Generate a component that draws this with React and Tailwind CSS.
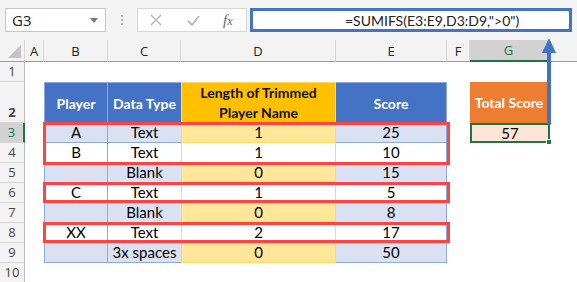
import React from 'react';

// sheet data, rows 3..9
const rows = [
  { n: 3, player: 'A', type: 'Text', len: 1, score: 25 },
  { n: 4, player: 'B', type: 'Text', len: 1, score: 10 },
  { n: 5, player: '', type: 'Blank', len: 0, score: 15 },
  { n: 6, player: 'C', type: 'Text', len: 1, score: 5 },
  { n: 7, player: '', type: 'Blank', len: 0, score: 8 },
  { n: 8, player: 'XX', type: 'Text', len: 2, score: 17 },
  { n: 9, player: '', type: '3x spaces', len: 0, score: 50 },
];

function RowHead({ n, selected, className = '' }) {
  return (
    <div
      className={`w-[25px] shrink-0 flex items-end justify-center pb-[1px] border-b border-[#d4d4d4] text-[13px] leading-[17px] [font-family:'Open_Sans',sans-serif] ${
        selected
          ? 'bg-[#d2d2d2] text-[#217346] border-r-2 border-r-[#217346]'
          : 'bg-[#f3f3f3] text-[#444] border-r border-r-[#bdbdbd]'
      } ${className}`}
    >
      {n}
    </div>
  );
}

function ColHead({ label, w, selected }) {
  return (
    <div
      className={`${w} shrink-0 flex items-center justify-center pt-[2px] border-r border-[#d4d4d4] text-[13px] [font-family:'Open_Sans',sans-serif] ${
        selected ? 'bg-[#d2d2d2] text-[#217346] border-b-2 border-b-[#217346]' : 'text-[#222] border-b border-b-[#9b9b9b]'
      }`}
    >
      {label}
    </div>
  );
}

export default function App() {
  return (
    <div className="relative w-[577px] h-[282px] overflow-hidden bg-white [font-family:Lato,sans-serif] text-[15px] text-black">
      {/* Formula bar strip */}
      <div className="h-[40px] bg-[#f3f3f3] flex items-start pt-[8px] pl-[5px] pr-[5px]">
        <div className="w-[101px] h-[24px] bg-white border border-[#c6c6c6] flex items-center justify-between pl-[6px] pr-[7px] text-[15px] text-[#222] [font-family:'Open_Sans',sans-serif]">
          <span>G3</span>
          <span className="w-0 h-0 border-l-[4px] border-r-[4px] border-t-[5px] border-l-transparent border-r-transparent border-t-[#777]" />
        </div>
        <div className="w-[31px] h-[24px] flex flex-col items-center justify-center gap-[2px]">
          <span className="w-[2px] h-[2px] bg-[#b0b0b0]" />
          <span className="w-[2px] h-[2px] bg-[#b0b0b0]" />
          <span className="w-[2px] h-[2px] bg-[#b0b0b0]" />
        </div>
        <div className="w-[110px] h-[24px] bg-white border border-[#d6d6d6] flex items-center pl-[12px] text-[#b5b5b5]">
          <svg width="12" height="12" viewBox="0 0 12 12" className="mr-[25px]">
            <path d="M1 1 L11 11 M11 1 L1 11" stroke="#b8b8b8" strokeWidth="1.6" fill="none" />
          </svg>
          <svg width="13" height="11" viewBox="0 0 13 11" className="mr-[23px]">
            <path d="M1 6 L5 10 L12 1" stroke="#b8b8b8" strokeWidth="1.8" fill="none" />
          </svg>
          <span className="italic text-[15px] text-[#666] [font-family:'Liberation_Serif',serif]">
            f<span className="text-[12px]">x</span>
          </span>
        </div>
        <div className="ml-[3px] flex-1 h-[24px] bg-white border-[3px] border-[#4472c4] flex items-center pl-[92px] text-[14px] text-[#222]">
          =SUMIFS(E3:E9,D3:D9,"&gt;0")
        </div>
      </div>

      {/* Column headers */}
      <div className="h-[22px] flex bg-[#f3f3f3]">
        <div className="w-[25px] shrink-0 relative border-r border-[#d4d4d4] border-b border-b-[#9b9b9b]">
          <svg className="absolute right-[3px] bottom-[3px]" width="13" height="13" viewBox="0 0 13 13">
            <polygon points="13,0 13,13 0,13" fill="#c4c4c4" />
          </svg>
        </div>
        <ColHead label="A" w="w-[19px]" />
        <ColHead label="B" w="w-[64px]" />
        <ColHead label="C" w="w-[73px]" />
        <ColHead label="D" w="w-[155px]" />
        <ColHead label="E" w="w-[111px]" />
        <ColHead label="F" w="w-[23px]" />
        <ColHead label="G" w="w-[78px]" selected />
        <div className="flex-1 border-b border-b-[#9b9b9b]" />
      </div>

      {/* Sheet body */}
      <div className="relative">
        {/* row 1 */}
        <div className="h-[20px] flex">
          <RowHead n={1} />
        </div>

        {/* row 2 - headers */}
        <div className="h-[41px] flex text-[14px] font-bold">
          <RowHead n={2} />
          <div className="w-[19px] shrink-0" />
          <div className="w-[64px] shrink-0 bg-[#4472c4] border border-[#8ea9db] border-b-0 text-white flex items-center justify-center">
            Player
          </div>
          <div className="w-[73px] shrink-0 bg-[#4472c4] border-t border-[#8ea9db] text-white flex items-center justify-center">
            Data Type
          </div>
          <div className="w-[155px] shrink-0 bg-[#ffc000] border-x border-t border-[#ffd966] flex items-center justify-center">
            <div className="text-center leading-[20px] text-[#111]">
              <div>Length of Trimmed</div>
              <div>Player Name</div>
            </div>
          </div>
          <div className="w-[111px] shrink-0 bg-[#4472c4] border-t border-r border-[#8ea9db] text-white flex items-center justify-center">
            Score
          </div>
          <div className="w-[23px] shrink-0" />
          <div className="w-[78px] shrink-0 bg-[#ed7d31] text-white flex items-center justify-center">
            Total Score
          </div>
        </div>

        {/* data rows */}
        {rows.map((r) => {
          const band = r.n % 2 === 1;
          const blue = band ? 'bg-[#d9e1f2]' : 'bg-white';
          const yellow = band ? 'bg-[#ffe699]' : 'bg-white';
          return (
            <div key={r.n} className="h-[20px] flex">
              <RowHead n={r.n} selected={r.n === 3} />
              <div className="w-[19px] shrink-0" />
              <div className={`w-[64px] shrink-0 ${blue} border-x border-b border-[#8ea9db] flex items-center justify-center`}>
                {r.player}
              </div>
              <div className={`w-[73px] shrink-0 ${blue} border-b border-[#8ea9db] flex items-center justify-center`}>
                {r.type}
              </div>
              <div className={`w-[155px] shrink-0 ${yellow} border-x border-b border-[#ffd966] flex items-center justify-center`}>
                {r.len}
              </div>
              <div className={`w-[111px] shrink-0 ${blue} border-r border-b border-[#8ea9db] flex items-center justify-center`}>
                {r.score}
              </div>
              <div className="w-[23px] shrink-0" />
              {r.n === 3 && (
                <div className="relative w-[80px] shrink-0 bg-[#fce4d6] border-2 border-[#217346] flex items-center justify-center">
                  57
                  <span className="absolute -right-[4px] -bottom-[4px] w-[6px] h-[6px] bg-[#217346] border border-white" />
                </div>
              )}
            </div>
          );
        })}

        {/* row 10 */}
        <div className="h-[20px] flex">
          <RowHead n={10} />
        </div>

        {/* red highlight boxes */}
        <div className="absolute left-[43px] top-[60px] w-[407px] h-[43px] border-[3px] border-[#ff4343]" />
        <div className="absolute left-[43px] top-[120px] w-[407px] h-[21px] border-[3px] border-[#ff4343]" />
        <div className="absolute left-[43px] top-[160px] w-[407px] h-[21px] border-[3px] border-[#ff4343]" />
      </div>

      {/* arrow from G3 to formula bar */}
      <svg className="absolute left-[540px] top-[36px]" width="20" height="88" viewBox="0 0 20 88">
        <rect x="7" y="14" width="4" height="74" fill="#4472c4" />
        <polygon points="9,2 2,17 16,17" fill="#4472c4" />
      </svg>
    </div>
  );
}
